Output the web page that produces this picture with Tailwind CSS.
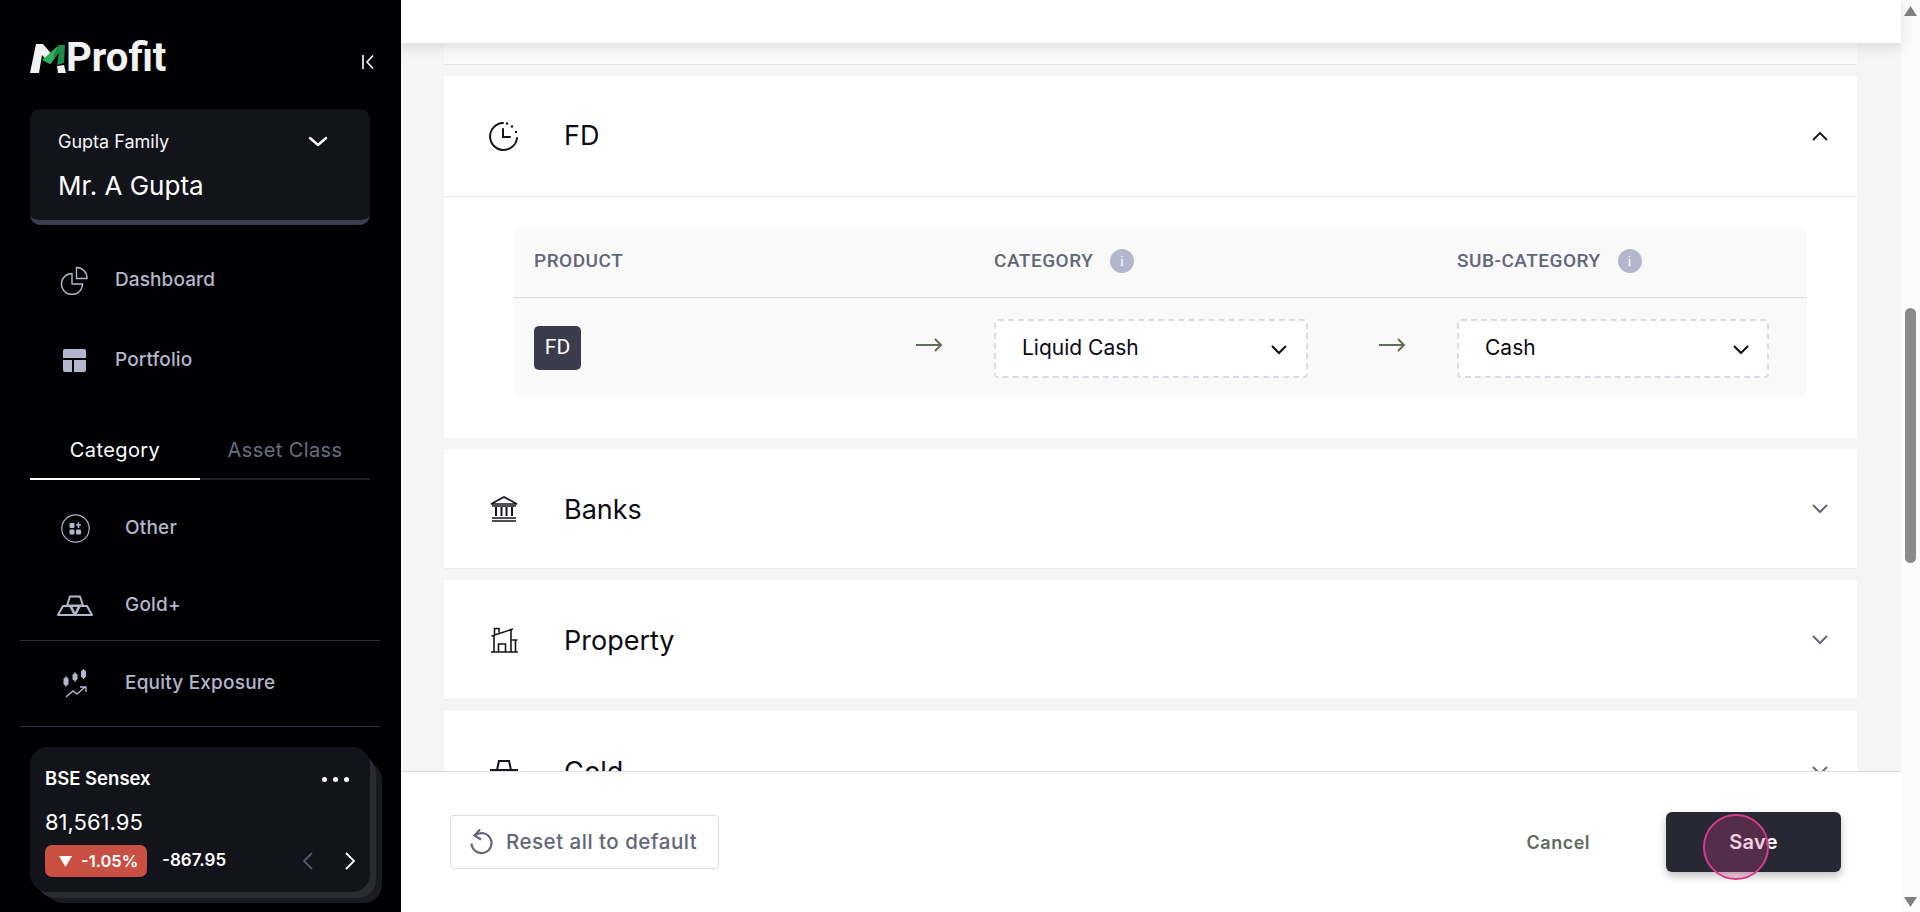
<!DOCTYPE html>
<html lang="en">
<head>
    <meta charset="UTF-8">
    <title>MProfit</title>
    <script src="https://cdn.jsdelivr.net/npm/@tailwindcss/browser@4"></script>
</head>
<body class="h-[912px] overflow-hidden bg-white font-['Inter',sans-serif]">
<div class="flex h-[912px]">

    <!-- sidebar -->
    <aside class="w-[401px] h-full shrink-0 bg-[#010104] flex flex-col">
        <div class="h-[109px] pl-[30px] pr-[26px] pt-[40px] flex justify-between items-start">
            <div class="flex items-center h-[36px]">
                <svg width="37" height="29" viewBox="0 0 37 29" class="shrink-0">
                    <path d="M0 29 L6 0 L13 0 L25 14 L20 20 L12 11 L9 29 Z" fill="#f2f2f2"/>
                    <path d="M12 16 L29 1 L20 20 Z" fill="#2eb35a"/>
                    <path d="M29 1 L35 1 L34 19 L27 21 L29 9 L20 20 Z" fill="#1f8a45"/>
                    <path d="M27 22 L34 21 L36 29 L28 29 Z" fill="#f2f2f2"/>
                </svg>
                <span class="font-['Roboto',sans-serif] text-[40px] leading-none font-bold text-[#f2f2f2] -ml-[1px]">Profit</span>
            </div>
            <svg width="14" height="16" viewBox="0 0 14 16" class="mt-[14px]" fill="none" stroke="#fff" stroke-width="1.6"><path d="M2 1v14M12 1.5 6 8l6 6.5"/></svg>
        </div>

        <div class="mx-[30px] w-[340px] h-[116px] rounded-[10px] bg-[#13141b] border-b-[5px] border-[#3a3c4c] pl-[28px] pr-[42px] pt-[21px]">
            <div class="flex justify-between items-center h-[22px]">
                <span class="text-[18px] text-[#f5f5f5]">Gupta Family</span>
                <svg width="20" height="11" viewBox="0 0 20 11" fill="none" stroke="#fff" stroke-width="2.4" stroke-linecap="round" stroke-linejoin="round"><path d="M2 2l8 7 8-7"/></svg>
            </div>
            <div class="mt-[17px] text-[26px] leading-[34px] text-white">Mr. A Gupta</div>
        </div>

        <nav class="mt-[15px]">
            <div class="h-[80px] flex items-center pl-[60px] gap-[26px] text-[19px] font-medium tracking-[0.1px] text-[#b3b6cc]">
                <svg width="29" height="29" viewBox="0 0 29 29" fill="none" stroke="#b3b6cc" stroke-width="1.4"><path d="M12 7.500a10.500 10.500 0 1 0 10.500 10.500H12Z"/><path d="M16.500 1.500a10.500 10.500 0 0 1 10.500 11H16.500Z"/></svg>
                <span>Dashboard</span>
            </div>
            <div class="h-[80px] flex items-center pl-[63px] gap-[29px] text-[19px] font-medium tracking-[0.1px] text-[#b3b6cc]">
                <svg width="23" height="23" viewBox="0 0 23 23" fill="#b3b6cc"><path d="M2 0h19a2 2 0 0 1 2 2v7H0V2a2 2 0 0 1 2-2Z"/><path d="M0 11h9v12H2a2 2 0 0 1-2-2Z"/><path d="M11 11h12v10a2 2 0 0 1-2 2H11Z"/></svg>
                <span>Portfolio</span>
            </div>
        </nav>

        <div class="mx-[30px] w-[340px] mt-[29px] flex h-[51px] text-[20px] tracking-[0.4px]">
            <div class="w-[170px] text-center text-white border-b-2 border-white pt-[6px]">Category</div>
            <div class="w-[170px] text-center text-[#6a6c80] border-b-2 border-[#1b1c22] pt-[6px]">Asset Class</div>
        </div>

        <div class="mt-[10px] mx-[20px] w-[360px]">
            <div class="h-[77px] flex items-center pl-[37px] text-[19px] font-medium tracking-[0.2px] text-[#b3b6cc]">
                <div class="w-[36px] flex justify-center">
                    <svg width="29" height="29" viewBox="0 0 29 29" fill="none"><circle cx="14.500" cy="14.500" r="13.700" stroke="#b3b6cc" stroke-width="1.200"/><rect x="8.500" y="9" width="5" height="5" rx="1" fill="#b3b6cc"/><rect x="8.500" y="15.500" width="5" height="5" rx="1" fill="#b3b6cc"/><rect x="15" y="15.500" width="5" height="5" rx="1" fill="#b3b6cc"/><path d="M17.500 8.500v5.500M15 11h5" stroke="#b3b6cc" stroke-width="1.600"/></svg>
                </div>
                <span class="ml-[32px]">Other</span>
            </div>
            <div class="h-[74px] pt-[3px] flex items-center pl-[37px] text-[19px] font-medium tracking-[0.2px] text-[#b3b6cc] border-b border-[#2d2e3c]">
                <div class="w-[36px] flex justify-center">
                    <svg width="36" height="21" viewBox="0 0 36 21" fill="none" stroke="#b3b6cc" stroke-width="2" stroke-linejoin="round"><path d="M13 1.500h10l3 9H10Z"/><path d="M6 11h8l4 9H1Z"/><path d="M22 11h8l5 9H18Z"/><path d="M13 11h10l-5 9Z"/></svg>
                </div>
                <span class="ml-[32px]">Gold+</span>
            </div>
            <div class="h-[86px] flex items-center pl-[37px] text-[19px] font-medium tracking-[0.2px] text-[#b3b6cc] border-b border-[#2d2e3c]">
                <div class="w-[36px] flex justify-center">
                    <svg width="24" height="29" viewBox="0 0 24 29" fill="none" stroke="#b3b6cc"><path d="M3 7v11M12 3v10M20.500 0v10" stroke-width="1"/><rect x="1" y="9" width="4" height="7" rx="1" fill="#b3b6cc"/><rect x="10" y="5" width="4" height="6" rx="1" fill="#b3b6cc"/><rect x="18.500" y="1.500" width="4" height="7" rx="1" fill="#b3b6cc"/><path d="M3 28l7-6 4 3 8-7M17 18h6v5" stroke-width="1.400"/></svg>
                </div>
                <span class="ml-[32px]">Equity Exposure</span>
            </div>
        </div>

        <!-- index card, two layers peek out behind it -->
        <div class="ml-[30px] mt-[20px] w-[340px] h-[145px] relative">
            <div class="absolute left-[15px] top-[15px] -right-[12px] -bottom-[11px] rounded-[18px] bg-[#1a1b20]"></div>
            <div class="absolute left-[7px] top-[8px] -right-[6px] -bottom-[6px] rounded-[18px] bg-[#2a2b30]"></div>
            <div class="relative h-[145px] rounded-[18px] bg-[#13141b] px-[15px] pt-[21px]">
                <div class="flex justify-between items-center h-[22px]">
                    <span class="text-[18.5px] font-semibold text-white">BSE Sensex</span>
                    <div class="flex gap-[6px] mr-[6px]">
                        <span class="w-[5px] h-[5px] rounded-full bg-white"></span>
                        <span class="w-[5px] h-[5px] rounded-full bg-white"></span>
                        <span class="w-[5px] h-[5px] rounded-full bg-white"></span>
                    </div>
                </div>
                <div class="mt-[16px] h-[32px] text-[22px] leading-[32px] text-white">81,561.95</div>
                <div class="mt-[7px] flex items-center h-[32px]">
                    <div class="w-[102px] h-[32px] rounded-[7px] bg-[#c94f42] flex items-center pl-[14px] gap-[9px] text-[16.5px] font-semibold text-white">
                        <svg width="13" height="11" viewBox="0 0 13 11" fill="#fff"><path d="M0 0h13L6.500 11Z"/></svg>
                        <span>-1.05%</span>
                    </div>
                    <span class="ml-[15px] text-[17px] font-semibold text-white">-867.95</span>
                    <div class="ml-auto flex gap-[32px]">
                        <svg width="10" height="18" viewBox="0 0 10 18" fill="none" stroke="#55566a" stroke-width="1.800"><path d="M9 1 1 9l8 8"/></svg>
                        <svg width="10" height="18" viewBox="0 0 10 18" fill="none" stroke="#fff" stroke-width="1.800"><path d="M1 1l8 8-8 8"/></svg>
                    </div>
                </div>
            </div>
        </div>
    </aside>

    <!-- main panel -->
    <main class="w-[1500px] h-full flex flex-col bg-[#f5f5f5] relative">
        <div class="h-[43px] shrink-0 bg-white shadow-[0_4px_14px_rgba(0,0,0,0.12)] z-10"></div>

        <div class="h-[728px] overflow-hidden pl-[43px] pr-[44px] flex flex-col gap-[11px]">
            <div class="h-[22px] shrink-0 bg-[#fafafa] border-b border-[#e6e6ee]"></div>

            <section class="shrink-0 bg-white h-[362px]">
                <div class="h-[121px] border-b border-[#e9e9f0] flex items-center pl-[44px] pr-[28px] text-[27px] text-[#0b0b14]">
                    <svg width="32" height="32" viewBox="0 0 32 32" fill="none" stroke="#14141c" stroke-width="2" stroke-linecap="round"><path d="M15 3a13.500 13.500 0 1 0 14 15"/><path d="M15 9v8h7"/><circle cx="19" cy="3.500" r="1.200" fill="#14141c" stroke="none"/><circle cx="24" cy="6.500" r="1.200" fill="#14141c" stroke="none"/><circle cx="28" cy="12" r="1.200" fill="#14141c" stroke="none"/></svg>
                    <span class="ml-[44px]">FD</span>
                    <svg width="18" height="10" viewBox="0 0 18 10" class="ml-auto" fill="none" stroke="#14141c" stroke-width="1.800"><path d="M2 9l7-7 7 7"/></svg>
                </div>
                <div class="ml-[70px] mt-[30px] w-[1293px] h-[171px] rounded-[10px] bg-[#f9f9f9]">
                    <div class="h-[71px] pb-[2px] border-b border-[#dcdce6] grid grid-cols-[460px_463px_1fr] pl-[20px] items-center text-[19px] font-medium text-[#646679] font-['Roboto',sans-serif] tracking-[0.5px]">
                        <span>PRODUCT</span>
                        <div class="flex items-center gap-[17px]">
                            <span>CATEGORY</span>
                            <span class="w-[24px] h-[24px] rounded-full bg-[#b3b6cc] text-white text-[14px] flex items-center justify-center font-['Liberation_Serif',serif]">i</span>
                        </div>
                        <div class="flex items-center gap-[17px]">
                            <span>SUB-CATEGORY</span>
                            <span class="w-[24px] h-[24px] rounded-full bg-[#b3b6cc] text-white text-[14px] flex items-center justify-center font-['Liberation_Serif',serif]">i</span>
                        </div>
                    </div>
                    <div class="h-[100px] grid grid-cols-[460px_463px_1fr] pl-[20px] items-center">
                        <div class="flex items-center">
                            <div class="w-[47px] h-[44px] rounded-[5px] bg-[#3a3c4c] text-white text-[21px] flex items-center justify-center font-['Roboto',sans-serif]">FD</div>
                            <svg width="28" height="14" viewBox="0 0 28 14" class="ml-[334px] -mt-[6px]" fill="none" stroke="#5f6f58" stroke-width="2"><path d="M1 7h25M20 1l6 6-6 6"/></svg>
                        </div>
                        <div class="flex items-center">
                            <div class="w-[314px] h-[59px] rounded-[4px] bg-white border-2 border-dashed border-[#dcdce6] pl-[26px] pr-[19px] flex items-center justify-between text-[21px] text-[#0b0b14]">
                                <span>Liquid Cash</span>
                                <svg width="16" height="10" viewBox="0 0 16 10" fill="none" stroke="#0b0b14" stroke-width="2" class="mt-[3px]"><path d="M1 1l7 7 7-7"/></svg>
                            </div>
                            <svg width="28" height="14" viewBox="0 0 28 14" class="ml-[70px] -mt-[6px]" fill="none" stroke="#5f6f58" stroke-width="2"><path d="M1 7h25M20 1l6 6-6 6"/></svg>
                        </div>
                        <div class="w-[312px] h-[59px] rounded-[4px] bg-white border-2 border-dashed border-[#dcdce6] pl-[26px] pr-[18px] flex items-center justify-between text-[21px] text-[#0b0b14]">
                            <span>Cash</span>
                            <svg width="16" height="10" viewBox="0 0 16 10" fill="none" stroke="#0b0b14" stroke-width="2" class="mt-[3px]"><path d="M1 1l7 7 7-7"/></svg>
                        </div>
                    </div>
                </div>
            </section>

            <section class="shrink-0 h-[120px] bg-white border-b border-[#ececf0] flex items-center pl-[45px] pr-[28px] text-[27px] text-[#0b0b14]">
                <svg width="30" height="28" viewBox="0 0 30 28" fill="none" stroke="#14141c" stroke-width="1.600"><path d="M2 9 15 2l13 7Z"/><path d="M7 12v9M12.500 12v9M17.500 12v9M23 12v9" stroke-width="2"/><path d="M3 11h24M3 23h24M3 26h24"/></svg>
                <span class="ml-[45px] mt-[3px]">Banks</span>
                <svg width="18" height="10" viewBox="0 0 18 10" class="ml-auto" fill="none" stroke="#646679" stroke-width="2"><path d="M2 1l7 7 7-7"/></svg>
            </section>

            <section class="shrink-0 h-[120px] bg-white border-b border-[#ececf0] flex items-center pl-[45px] pr-[28px] text-[27px] text-[#0b0b14]">
                <svg width="30" height="28" viewBox="0 0 30 28" fill="none" stroke="#14141c" stroke-width="1.600"><path d="M2 26h27M5 26V9.500M5.500 9V2.500H10V6.500M2.500 10 24 3M22 26V4M22 14h6.500M26.500 14v12M9.500 26V18h7v8"/></svg>
                <span class="ml-[45px] mt-[3px]">Property</span>
                <svg width="18" height="10" viewBox="0 0 18 10" class="ml-auto" fill="none" stroke="#646679" stroke-width="2"><path d="M2 1l7 7 7-7"/></svg>
            </section>

            <section class="shrink-0 h-[120px] bg-white flex items-center pl-[45px] pr-[28px] text-[27px] text-[#0b0b14]">
                <svg width="30" height="28" viewBox="0 0 30 28" fill="none" stroke="#14141c" stroke-width="2"><path d="M8 13l2-9h10l2 9M1 13h28M7 13v9h16v-9"/></svg>
                <span class="ml-[45px] mt-[3px]">Gold</span>
                <svg width="18" height="10" viewBox="0 0 18 10" class="ml-auto" fill="none" stroke="#646679" stroke-width="2"><path d="M2 1l7 7 7-7"/></svg>
            </section>
        </div>

        <footer class="h-[141px] shrink-0 bg-white border-t border-[#dcdce6] flex items-center pl-[49px] pr-[60px] z-10">
            <button class="w-[269px] h-[54px] rounded-[4px] border border-[#dcdce6] flex items-center pl-[18px] gap-[13px] text-[20.5px] font-medium tracking-[0.5px] text-[#646679]">
                <svg width="24" height="28" viewBox="0 0 24 28" fill="none" stroke="#646679" stroke-width="2.200"><path d="M6 7.500a10 10 0 1 1-3.500 8"/><path d="M11 1.500 5.500 7.500l6.500 4"/></svg>
                <span>Reset all to default</span>
            </button>
            <span class="ml-auto text-[18px] font-semibold tracking-[0.5px] text-[#5f6b5e]">Cancel</span>
            <button class="ml-[76px] w-[175px] h-[60px] rounded-[6px] bg-[#272833] text-white text-[20px] font-semibold tracking-[0.3px] shadow-[0_4px_8px_rgba(0,0,0,0.25)] relative">
                Save
                <span class="absolute left-[37px] top-[2px] w-[66px] h-[66px] rounded-full border-2 border-[#d63a8c] bg-[#d63a8c]/25"></span>
            </button>
        </footer>
    </main>

    <!-- scrollbar -->
    <div class="w-[19px] h-full shrink-0 bg-[#fbfbfb] flex flex-col items-center">
        <svg width="13" height="10" viewBox="0 0 13 10" class="mt-[6px]" fill="#808080"><path d="M6.500 0 13 10H0Z"/></svg>
        <div class="mt-[292px] w-[11px] h-[255px] rounded-full bg-[#8a8a8a]"></div>
        <svg width="13" height="10" viewBox="0 0 13 10" class="mt-auto mb-[5px]" fill="#808080"><path d="M0 0h13L6.500 10Z"/></svg>
    </div>
</div>
</body>
</html>
